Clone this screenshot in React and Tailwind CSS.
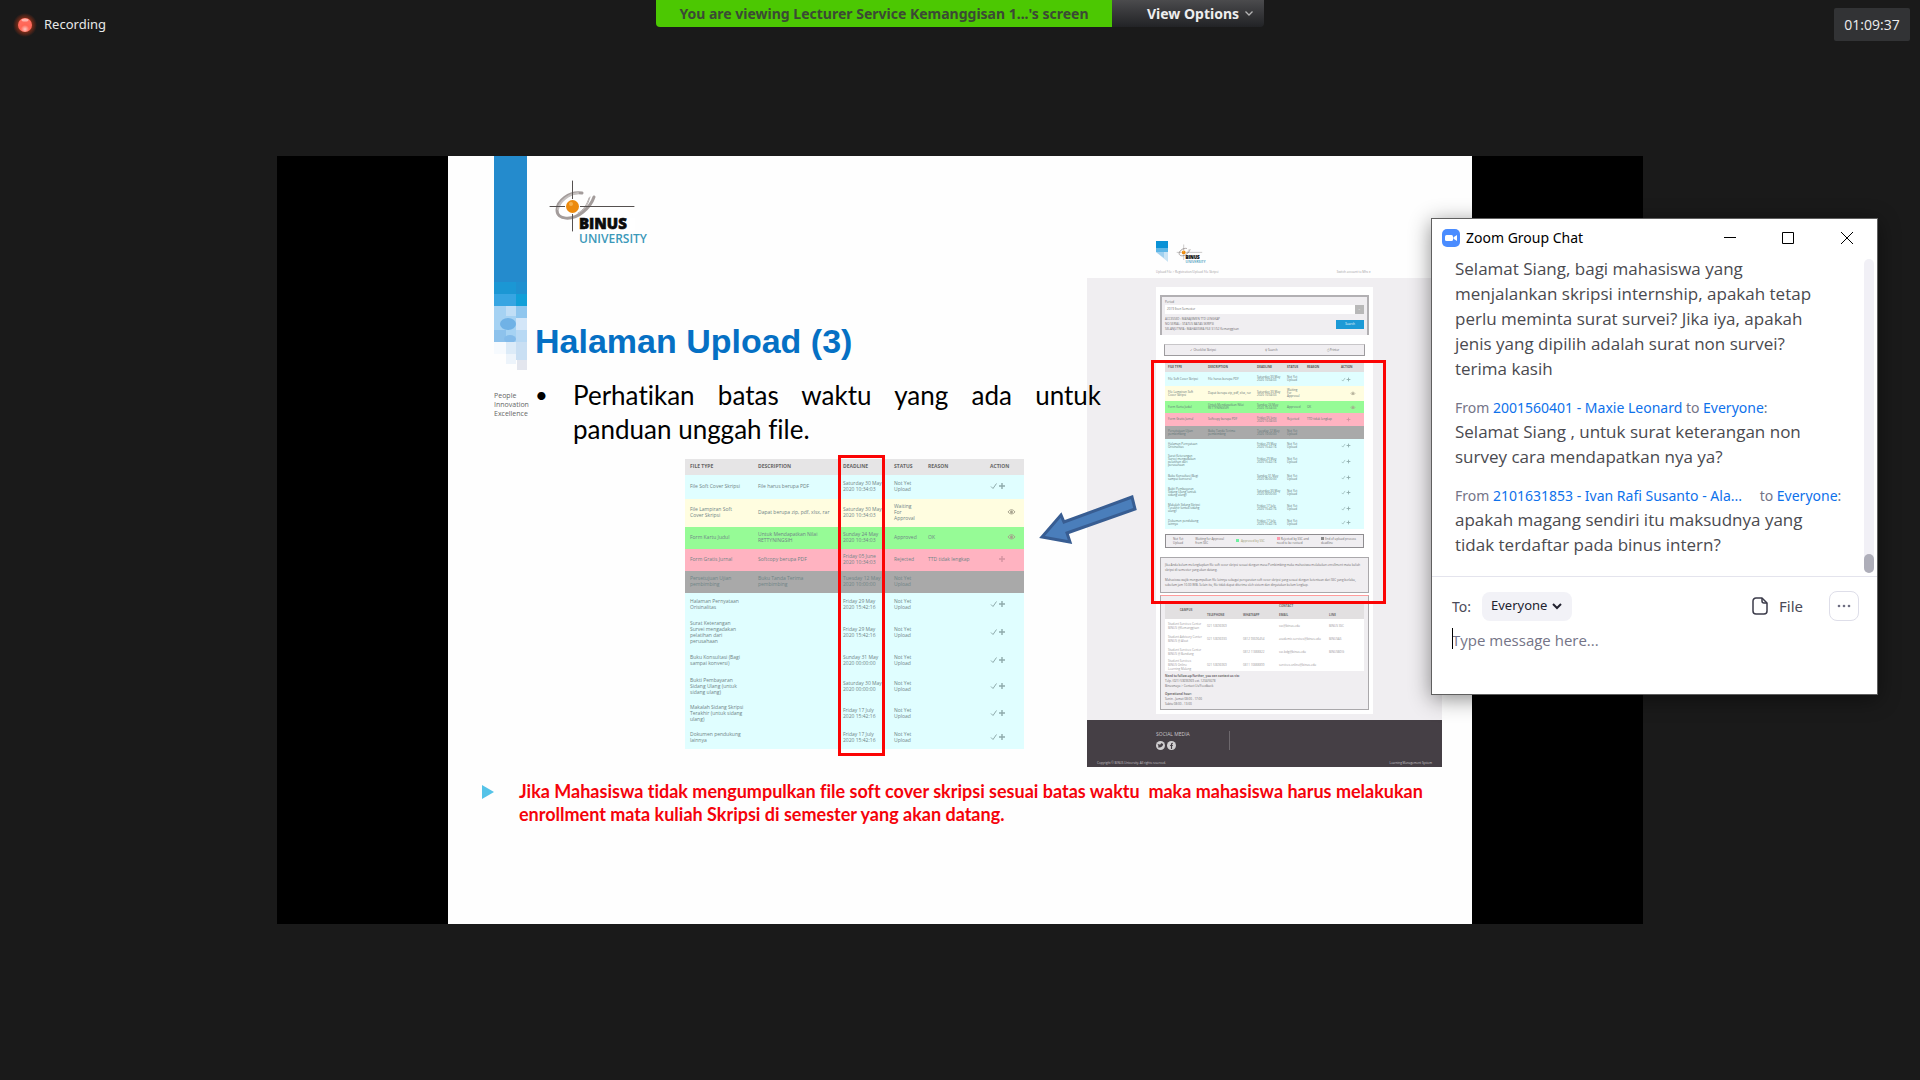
import React from "react";

const cyan = "bg-[#e0feff]";

const files = [
  { name: ["File Soft Cover Skripsi"], desc: ["File harus berupa PDF"], date: ["Saturday 30 May", "2020 10:34:03"], status: ["Not Yet", "Upload"], reason: "", act: "edit", bg: cyan, big: "h-[24px]", small: "h-[14px]" },
  { name: ["File Lampiran Soft", "Cover Skripsi"], desc: ["Dapat berupa zip, pdf, xlsx, rar"], date: ["Saturday 30 May", "2020 10:34:03"], status: ["Waiting", "For", "Approval"], reason: "", act: "view", bg: "bg-[#fffde0]", big: "h-[28px]", small: "h-[15px]" },
  { name: ["Form Kartu Judul"], desc: ["Untuk Mendapatkan Nilai", "RETTYNINGSIH"], date: ["Sunday 24 May", "2020 10:34:03"], status: ["Approved"], reason: "OK", act: "view", bg: "bg-[#96fb96]", big: "h-[22px]", small: "h-[12px]" },
  { name: ["Form Gratis Jurnal"], desc: ["Softcopy berupa PDF"], date: ["Friday 05 June", "2020 10:34:03"], status: ["Rejected"], reason: "TTD tidak lengkap", act: "faint", bg: "bg-[#ffb3c1]", big: "h-[22px]", small: "h-[13px]" },
  { name: ["Persetujuan Ujian", "pembimbing"], desc: ["Buku Tanda Terima", "pembimbing"], date: ["Tuesday 12 May", "2020 10:00:00"], status: ["Not Yet", "Upload"], reason: "", act: "", bg: "bg-[#a9a9a9]", big: "h-[22px]", small: "h-[13px]" },
  { name: ["Halaman Pernyataan", "Orisinalitas"], desc: [], date: ["Friday 29 May", "2020 15:42:16"], status: ["Not Yet", "Upload"], reason: "", act: "edit", bg: cyan, big: "h-[24px]", small: "h-[13px]" },
  { name: ["Surat Keterangan", "Survei mengadakan", "pelatihan dari", "perusahaan"], desc: [], date: ["Friday 29 May", "2020 15:42:16"], status: ["Not Yet", "Upload"], reason: "", act: "edit", bg: cyan, big: "h-[32px]", small: "h-[18px]" },
  { name: ["Buku Konsultasi (Bagi", "sampai konversi)"], desc: [], date: ["Sunday 31 May", "2020 00:00:00"], status: ["Not Yet", "Upload"], reason: "", act: "edit", bg: cyan, big: "h-[24px]", small: "h-[15px]" },
  { name: ["Bukti Pembayaran", "Sidang Ulang (untuk", "sidang ulang)"], desc: [], date: ["Saturday 30 May", "2020 00:00:00"], status: ["Not Yet", "Upload"], reason: "", act: "edit", bg: cyan, big: "h-[27px]", small: "h-[15px]" },
  { name: ["Makalah Sidang Skripsi", "Terakhir (untuk sidang", "ulang)"], desc: [], date: ["Friday 17 July", "2020 15:42:16"], status: ["Not Yet", "Upload"], reason: "", act: "edit", bg: cyan, big: "h-[27px]", small: "h-[16px]" },
  { name: ["Dokumen pendukung", "lainnya"], desc: [], date: ["Friday 17 July", "2020 15:42:16"], status: ["Not Yet", "Upload"], reason: "", act: "edit", bg: cyan, big: "h-[22px]", small: "h-[13px]" },
];

function Lines({ items }) {
  return items.map((t) => (
    <span key={t} className="block whitespace-nowrap">
      {t}
    </span>
  ));
}

function RowAction({ kind, small }) {
  const size = small ? "h-[5px] w-[10px]" : "h-[8px] w-[16px]";
  if (kind === "edit" || kind === "faint") {
    return (
      <svg viewBox="0 0 16 8" className={size} fill="none" stroke={kind === "faint" ? "#d493a0" : "#8fabac"}>
        {kind === "edit" && <path d="M1 4.5 3 6.5 6.5 1.5" strokeWidth="1" />}
        <path d="M12 1v6M9 4h6" strokeWidth="1.4" />
      </svg>
    );
  }
  if (kind === "view") {
    return (
      <svg viewBox="0 0 16 8" className={small ? "ml-[6px] h-[5px] w-[10px]" : "ml-[12px] h-[8px] w-[16px]"} fill="none" stroke="#a5a08c">
        <path d="M6 4c2-3 5-3 7 0-2 2.500-5 2.500-7 0z" />
        <circle cx="9.500" cy="4" r="1" fill="#a5a08c" />
      </svg>
    );
  }
  return null;
}

function UploadTable({ small = false }) {
  const pad = small ? "pl-[3px] pb-0" : "pl-[5px] pb-[2px]";
  const widths = small
    ? ["w-[40px]", "w-[49px]", "w-[30px]", "w-[20px]", "w-[34px]", "w-[26px]"]
    : ["w-[68px]", "w-[85px]", "w-[51px]", "w-[34px]", "w-[62px]", "w-[39px]"];
  return (
    <table
      className={
        small
          ? "w-[199px] table-fixed border-collapse text-left text-[3px] leading-[3px] text-[#5f7476]"
          : "w-[339px] table-fixed border-collapse text-left text-[5px] leading-[6px] text-[#6f8486]"
      }
    >
      <thead>
        <tr className={small ? "h-[10px] bg-[#e2e0e1] text-[#555]" : "h-[16px] bg-[#e6e5e6] text-[#666]"}>
          {["FILE TYPE", "DESCRIPTION", "DEADLINE", "STATUS", "REASON", "ACTION"].map((h, i) => (
            <th key={h} className={`${pad} ${widths[i]} pt-0 align-middle font-bold whitespace-nowrap`}>
              {h}
            </th>
          ))}
        </tr>
      </thead>
      <tbody>
        {files.map((f) => (
          <tr key={f.name[0]} className={`${f.bg} ${small ? f.small : f.big}`}>
            <td className={`${pad} pt-0 align-middle`}><Lines items={f.name} /></td>
            <td className={`${pad} pt-0 align-middle`}><Lines items={f.desc} /></td>
            <td className={`${pad} pt-0 align-middle`}><Lines items={f.date} /></td>
            <td className={`${pad} pt-0 align-middle`}><Lines items={f.status} /></td>
            <td className={`${pad} pt-0 align-middle whitespace-nowrap`}>{f.reason}</td>
            <td className={`${pad} pt-0 align-middle`}><RowAction kind={f.act} small={small} /></td>
          </tr>
        ))}
      </tbody>
    </table>
  );
}

function BinusLogo({ className }) {
  return (
    <svg viewBox="0 0 104 68" className={className} role="img" aria-label="Binus University">
      <g fill="none" strokeLinecap="round">
        <path d="M35 15C22 13 10 23 10 32c0 10 15 11 26 2 5-4 9-9 11-15" stroke="#a39c9b" strokeWidth="3" />
        <path d="M31 15c-9 1-18 8-20 16" stroke="#c4bfbe" strokeWidth="2" />
        <path d="M31 35c6-3 9-9 11-15M35 33c5-4 6-8 8-14" stroke="#b5afae" strokeWidth="1" />
        <path d="M3 28.500H87M25.500 3V53" stroke="#55504f" strokeWidth="1" />
      </g>
      <circle cx="25.500" cy="28.500" r="7.500" fill="#fff" />
      <circle cx="25.500" cy="28.500" r="6.500" fill="#ec8a0d" />
      <circle cx="24" cy="26" r="2" fill="#f6b04c" />
      <rect x="32" y="40" width="56" height="13" fill="#fff" />
      <text x="32" y="51" fontFamily="Open Sans, sans-serif" fontWeight="800" fontSize="15" fill="#0b0b0b" stroke="#0b0b0b" strokeWidth=".6">BINUS</text>
      <text x="32" y="65" fontFamily="Open Sans, sans-serif" fontWeight="600" fontSize="12" fill="#3b98b9">UNIVERSITY</text>
    </svg>
  );
}

function Ribbon() {
  return (
    <svg viewBox="0 0 33 215" className="block h-[215px] w-[33px]" aria-hidden="true">
      <rect width="33" height="150" fill="#248bcd" />
      <rect y="126" width="22" height="12" fill="#1b97d4" />
      <rect x="22" y="126" width="11" height="12" fill="#1f90d0" />
      <rect y="138" width="22" height="12" fill="#37a5e2" />
      <rect x="22" y="138" width="11" height="12" fill="#119fd8" />
      <rect y="150" width="33" height="36" fill="#a5d2f3" />
      <rect x="12" y="150" width="10" height="10" fill="#c0def6" />
      <rect x="22" y="150" width="11" height="12" fill="#8fc6ee" />
      <ellipse cx="14" cy="168" rx="8" ry="6" fill="#70b2e6" />
      <rect x="22" y="162" width="11" height="12" fill="#d3e6f8" />
      <rect x="0" y="174" width="12" height="12" fill="#8dc2ec" />
      <ellipse cx="16" cy="183" rx="6" ry="4" fill="#83bbea" />
      <rect x="22" y="174" width="11" height="12" fill="#b8d9f4" />
      <rect y="186" width="12" height="12" fill="#f6fafe" />
      <rect x="12" y="186" width="10" height="12" fill="#dcebf8" />
      <rect x="22" y="186" width="11" height="18" fill="#c9dff3" />
      <rect x="12" y="198" width="10" height="10" fill="#edf4fb" />
      <rect x="23" y="204" width="10" height="10" fill="#e3e6ee" />
    </svg>
  );
}

const contacts = [
  { who: ["Student Services Center", "BINUS @Kemanggisan"], phone: "021 53696969", wa: "", mail: "ssc@binus.edu", line: "BINUS SSC" },
  { who: ["Student Advisory Center", "BINUS @ Alsut"], phone: "021 53696930", wa: "0812 93696454", mail: "academic.services@binus.edu", line: "BINUSAS" },
  { who: ["Student Services Center", "BINUS @ Bandung"], phone: "", wa: "0812 11888822", mail: "ssc.bdg@binus.edu", line: "BINUSBDG" },
  { who: ["Student Services", "BINUS Online", "Learning Malang"], phone: "021 53696969", wa: "0811 10888899", mail: "services.online@binus.edu", line: "" },
];

function WebPage() {
  return (
    <div className="flex flex-col text-[3px] leading-[5px] text-[#6d6a6c]">
      <div className="flex h-[42px] flex-col justify-between pr-[71px] pl-[69px]">
        <div className="flex items-start gap-[8px] pt-[5px]">
          <svg viewBox="0 0 12 21" className="h-[21px] w-[12px]" aria-hidden="true">
            <rect width="12" height="8" fill="#0a92d6" />
            <rect y="7" width="12" height="4" fill="#5db6e6" />
            <path d="M0 11h12v10z" fill="#c9e4f5" />
            <path d="M0 11h8v6z" fill="#9fd0ef" />
          </svg>
          <BinusLogo className="mt-[3px] h-[20px] w-[31px]" />
        </div>
        <div className="flex justify-between pb-[3px] text-[#a09da0]">
          <span>Upload File &gt; Registration/Upload File Skripsi</span>
          <span>Switch account to Mhs ▾</span>
        </div>
      </div>
      <div className="flex justify-center bg-[#f0eef1] pt-[9px] pb-[6px]">
        <div className="w-[217px] bg-white px-[4px] pt-[8px] pb-[4px]">
          <div className="h-[40px] border-2 border-b-0 border-[#b2b0b3] bg-[#f0eef1] px-[3px] pt-[3px]">
            <p>Period</p>
            <div className="flex h-[9px] items-center justify-between bg-white pl-[2px]">
              <span>2019 Even Semester</span>
              <span className="h-[9px] w-[9px] bg-[#b8b8b8] text-center leading-[9px] text-white">⌄</span>
            </div>
            <div className="flex items-center justify-between pt-[3px]">
              <div>
                <p>ACCESSED : MANAJEMEN TTD LENGKAP</p>
                <p>NO SERIAL : STATUS BATAS SKRIPSI</p>
                <p>SELANJUTNYA : MAHASISWA FILE S1/S2 Kemanggisan</p>
              </div>
              <span className="h-[9px] w-[28px] bg-[#1d9ad6] text-center leading-[9px] text-white">Search</span>
            </div>
          </div>
          <div className="mx-[4px] mt-[9px] flex h-[12px] items-center justify-around border border-t-[#c8c6c9] border-[#9d9b9e] bg-[#f0eef1]">
            <span>✓ Checklist Skripsi</span>
            <span>⚲ Search</span>
            <span>⎙ Printer</span>
          </div>
          <div className="px-[5px] pt-[6px]">
            <UploadTable small />
          </div>
          <div className="mx-[5px] mt-[5px] flex h-[14px] items-center justify-between border border-[#8f8d90] bg-[#f0eef1] px-[7px] leading-[4px]">
            <span>Not Yet<br />Upload</span>
            <span>Waiting for Approval<br />from SSC</span>
            <span className="text-[#9c9c70]"><i className="mr-[2px] inline-block h-[3px] w-[3px] bg-[#6ef0a0]" />Approved by SSC</span>
            <span><i className="mr-[1px] inline-block h-[3px] w-[3px] bg-[#ff9cb0]" />Rejected by SSC and<br />need to be revised</span>
            <span><i className="mr-[1px] inline-block h-[3px] w-[3px] bg-[#888]" />End of upload process<br />deadline</span>
          </div>
          <div className="mt-[9px] h-[36px] overflow-hidden border border-[#aaa8ab] bg-[#f0eef1] px-[4px] pt-[5px]">
            <p>Jika Anda belum melengkapkan file soft cover skripsi sesuai dengan masa Pembimbing maka mahasiswa melakukan enrollment mata kuliah skripsi di semester yang akan datang.</p>
            <p className="pt-[5px]">Mahasiswa wajib mengumpulkan file lainnya sebagai persyaratan soft cover skripsi yang sesuai dengan ketentuan dari SSC yang berlaku, sebelum jam 10.00 WIB. Selain itu, file tidak dapat diterima oleh sistem dan dinyatakan belum lengkap.</p>
          </div>
          <div className="mt-[2px] border border-t-[#ff9c9c] border-[#aaa8ab] bg-[#f0eef1] px-[4px] pt-[5px] pb-[2px]">
            <table className="w-full table-fixed border-collapse bg-white text-left leading-[4px]">
              <thead className="bg-[#e2e0e1]">
                <tr className="h-[9px]">
                  <th className="w-[42px] p-0 text-center" rowSpan="2">CAMPUS</th>
                  <th className="w-[36px] p-0" />
                  <th className="w-[36px] p-0" />
                  <th className="w-[50px] p-0">CONTACT</th>
                  <th className="p-0" />
                </tr>
                <tr className="h-[9px]">
                  <th className="p-0">TELEPHONE</th>
                  <th className="p-0">WHATSAPP</th>
                  <th className="p-0">EMAIL</th>
                  <th className="p-0">LINE</th>
                </tr>
              </thead>
              <tbody className="text-[#9a979a]">
                {contacts.map((c) => (
                  <tr key={c.mail} className="h-[13px]">
                    <td className="p-0 pl-[3px] align-middle"><Lines items={c.who} /></td>
                    <td className="p-0 align-middle">{c.phone}</td>
                    <td className="p-0 align-middle">{c.wa}</td>
                    <td className="p-0 align-middle">{c.mail}</td>
                    <td className="p-0 align-middle">{c.line}</td>
                  </tr>
                ))}
              </tbody>
            </table>
            <div className="pt-[3px]">
              <p className="font-bold">Need to follow-up/further, you can contact us via:</p>
              <p>Telp. (021) 53696969 ext. 1234/5678</p>
              <p>Binusmaya &gt; Contact Us/Feedback</p>
              <p className="pt-[3px] font-bold">Operational hour:</p>
              <p>Senin - Jumat 08:00 - 17:00</p>
              <p>Sabtu 08:00 - 13:00</p>
            </div>
          </div>
        </div>
      </div>
      <div className="flex h-[47px] flex-col justify-between bg-[#453f45] px-[10px] pt-[11px] pb-[1px] text-[#c9c6c9]">
        <div className="flex gap-[39px] pl-[59px]">
          <div>
            <p className="text-[5px] leading-[6px]">SOCIAL MEDIA</p>
            <div className="flex gap-[2px] pt-[4px]">
              <svg viewBox="0 0 10 10" className="h-[9px] w-[9px]" aria-hidden="true">
                <circle cx="5" cy="5" r="5" fill="#d0ced0" />
                <path d="M2 7c3 1 6-1 6-4L7 3C6 2 5 3 5 4 4 4 3 4 2 3c0 1 0 2 1 2.500z" fill="#453f45" />
              </svg>
              <svg viewBox="0 0 10 10" className="h-[9px] w-[9px]" aria-hidden="true">
                <circle cx="5" cy="5" r="5" fill="#d0ced0" />
                <path d="M5 9V3.500Q5 2.500 6.500 2.500M3.500 5h3" stroke="#453f45" strokeWidth="1.300" fill="none" />
              </svg>
            </div>
          </div>
          <div className="h-[19px] w-px bg-[#6d686d]" />
        </div>
        <div className="flex justify-between">
          <span>Copyright © BINUS University. All rights reserved.</span>
          <span>Learning Management System</span>
        </div>
      </div>
    </div>
  );
}

function Slide() {
  return (
    <div className="relative w-full max-w-[1024px] bg-[#fefefe] pb-[98px] font-['Open_Sans',sans-serif]">
      <div className="flex pr-[30px] pl-[46px]">
        <div className="w-[33px] shrink-0">
          <Ribbon />
          <p className="pt-[20px] text-[7px] leading-[9px] text-[#666]">
            People
            <br />
            Innovation
            <br />
            Excellence
          </p>
        </div>
        <div className="relative z-10 min-w-0 flex-1 pt-[22px] pl-[8px]">
          <BinusLogo className="ml-[12px] h-[68px] w-[104px]" />
          <h1 className="pt-[75px] font-['Liberation_Sans',Arial,sans-serif] text-[34px] leading-[40px] font-bold text-[#0570c4]">
            Halaman Upload (3)
          </h1>
          <ul className="-mr-[14px] pt-[17px]">
            <li className="flex font-['Lato',sans-serif] text-[26px] leading-[34px] text-black [font-variant-ligatures:none]">
              <span className="w-[38px] shrink-0 text-[22px]">•</span>
              <span className="flex-1 text-justify">Perhatikan batas waktu yang ada untuk panduan unggah file.</span>
            </li>
          </ul>
          <div className="relative mt-[13px] ml-[150px] w-[339px]">
            <UploadTable />
            <div className="absolute top-[-4px] left-[153px] h-[301px] w-[47px] border-3 border-[#fb0404]" />
          </div>
        </div>
        <div className="relative w-[355px] shrink-0 pt-[80px]">
          <WebPage />
          <div className="absolute top-[204px] left-[64px] h-[244px] w-[235px] border-3 border-[#fb0404]" />
          <svg viewBox="0 0 100 56" className="absolute top-[337px] left-[-49px] z-20 h-[56px] w-[100px]" aria-hidden="true">
            <path d="M94 4 26 29 23 22 4 44 32 49 29 40 97 16z" fill="#4a7ebb" stroke="#385d92" strokeWidth="3" />
          </svg>
        </div>
      </div>
      <div className="flex gap-[25px] pt-[13px] pr-[40px] pl-[34px]">
        <svg viewBox="0 0 12 14" className="mt-[5px] h-[14px] w-[12px] shrink-0" aria-hidden="true">
          <path d="M0 0 12 7 0 14z" fill="#55c3e8" />
        </svg>
        <p className="font-['Lato',sans-serif] text-[18px] leading-[23px] font-bold whitespace-pre-wrap text-[#f5030b] [font-variant-ligatures:none]">
          {"Jika Mahasiswa tidak mengumpulkan file soft cover skripsi sesuai batas waktu  maka mahasiswa harus melakukan enrollment mata kuliah Skripsi di semester yang akan datang."}
        </p>
      </div>
    </div>
  );
}

function Message({ from, gap, text }) {
  return (
    <div className="pt-[15px]">
      <p className="text-[14px] leading-[23px] whitespace-nowrap text-[#747487]">
        From <a href="#sender" className="text-[#0e71eb]">{from}</a>
        <span className={gap ? "pl-[14px]" : ""}> to </span>
        <a href="#everyone" className="text-[#0e71eb]">Everyone</a>:
      </p>
      <p className="font-['Open_Sans',sans-serif] text-[17px] leading-[25px] text-[#4a4a4f]">{text}</p>
    </div>
  );
}

function ChatWindow() {
  return (
    <section className="absolute top-[218px] right-[42px] z-30 flex w-[447px] flex-col border border-[#5f5f5f] bg-white font-['Noto_Sans',sans-serif] shadow-[0_4px_20px_rgba(0,0,0,0.45)]">
      <header className="flex h-[37px] items-center pl-[10px]">
        <svg viewBox="0 0 18 18" className="h-[18px] w-[18px]" aria-hidden="true">
          <rect width="18" height="18" rx="5" fill="#4a8cff" />
          <rect x="3" y="6" width="8" height="6" rx="1.500" fill="#fff" />
          <path d="M11.500 8.200 15 6v6l-3.500-2.200z" fill="#fff" />
        </svg>
        <h2 className="ml-[6px] flex-1 text-[14px] text-black">Zoom Group Chat</h2>
        <button type="button" aria-label="Minimize" className="flex h-[37px] w-[58px] items-center justify-center">
          <svg viewBox="0 0 14 14" className="h-[14px] w-[14px]" stroke="#000" fill="none"><path d="M1 6.500h12" /></svg>
        </button>
        <button type="button" aria-label="Maximize" className="flex h-[37px] w-[58px] items-center justify-center">
          <svg viewBox="0 0 14 14" className="h-[14px] w-[14px]" stroke="#000" fill="none"><path d="M1.500 1.500h11v11h-11z" /></svg>
        </button>
        <button type="button" aria-label="Close" className="flex h-[37px] w-[60px] items-center justify-center">
          <svg viewBox="0 0 14 14" className="h-[14px] w-[14px]" stroke="#000" fill="none"><path d="M1 1l12 12M13 1 1 13" /></svg>
        </button>
      </header>
      <div className="flex border-b border-[#e4e4ed] pr-[3px] pb-[3px]">
        <div className="min-w-0 flex-1 pb-[16px] pl-[23px]">
          <div className="w-[360px]">
            <p className="font-['Open_Sans',sans-serif] text-[17px] leading-[25px] text-[#4a4a4f]">
              Selamat Siang, bagi mahasiswa yang menjalankan skripsi internship, apakah tetap perlu meminta surat survei? Jika iya, apakah jenis yang dipilih adalah surat non survei? terima kasih
            </p>
            <Message from="2001560401 - Maxie Leonard" text="Selamat Siang , untuk surat keterangan non survey cara mendapatkan nya ya?" />
            <Message gap from="2101631853 - Ivan Rafi Susanto - Ala..." text="apakah magang sendiri itu maksudnya yang tidak terdaftar pada binus intern?" />
          </div>
        </div>
        <div className="mt-[3px] flex w-[10px] flex-col justify-end rounded-full bg-[#f1f0f6]">
          <div className="h-[19px] rounded-full bg-[#aeaeb9]" />
        </div>
      </div>
      <div className="flex items-center pt-[14px] pr-[18px] pl-[20px] text-[15px] text-[#4a4a58]">
        <label htmlFor="to" className="w-[30px] text-[14px]">To:</label>
        <div className="relative">
          <select id="to" className="h-[29px] w-[90px] appearance-none rounded-[8px] bg-[#f2f2f7] pl-[9px] text-[13px] text-[#222230]">
            <option>Everyone</option>
          </select>
          <svg viewBox="0 0 10 8" className="pointer-events-none absolute top-[10px] right-[10px] h-[8px] w-[10px]" fill="none" stroke="#222230" strokeWidth="2" aria-hidden="true">
            <path d="M1 2l4 4 4-4" />
          </svg>
        </div>
        <button type="button" className="ml-auto flex items-center gap-[11px]">
          <svg viewBox="0 0 16 18" className="h-[18px] w-[16px]" fill="none" stroke="#3b3b4a" strokeWidth="1.500" strokeLinejoin="round" aria-hidden="true">
            <path d="M4 1h6l5 5v8a3 3 0 0 1-3 3H4a3 3 0 0 1-3-3V4a3 3 0 0 1 3-3z" />
            <path d="M10 1v3a2 2 0 0 0 2 2h3" />
          </svg>
          File
        </button>
        <button type="button" aria-label="More" className="ml-[26px] flex h-[30px] w-[30px] items-center justify-center rounded-[8px] border border-[#dedee9]">
          <svg viewBox="0 0 14 4" className="h-[4px] w-[14px]" fill="#6e6e82" aria-hidden="true">
            <circle cx="2" cy="2" r="1.300" />
            <circle cx="7" cy="2" r="1.300" />
            <circle cx="12" cy="2" r="1.300" />
          </svg>
        </button>
      </div>
      <div className="relative pt-[7px] pl-[20px]">
        <span className="absolute top-[7px] left-[20px] h-[21px] w-px bg-black" />
        <textarea
          aria-label="Message"
          placeholder="Type message here..."
          className="block h-[66px] w-full resize-none font-['Open_Sans',sans-serif] text-[15px] leading-[24px] outline-none placeholder:text-[#747487]"
        />
      </div>
    </section>
  );
}

export default function App() {
  return (
    <main className="relative min-h-screen bg-[#1a1a1a] font-['Noto_Sans',sans-serif]">
      <header className="grid h-[156px] grid-cols-[1fr_auto_1fr] items-start">
        <div className="flex items-center gap-[7px] pt-[13px] pl-[13px]">
          <svg viewBox="0 0 24 24" className="h-[24px] w-[24px]" aria-hidden="true">
            <defs>
              <radialGradient id="glow">
                <stop offset="50%" stopColor="#8a2f18" />
                <stop offset="100%" stopColor="#1a1a1a" />
              </radialGradient>
              <radialGradient id="dot" cy="0.8">
                <stop offset="0%" stopColor="#ffc4be" />
                <stop offset="60%" stopColor="#ff6554" />
                <stop offset="100%" stopColor="#ff6a5c" />
              </radialGradient>
            </defs>
            <circle cx="12" cy="12" r="12" fill="url(#glow)" />
            <circle cx="12" cy="12" r="7" fill="url(#dot)" />
            <ellipse cx="12" cy="7" rx="3.500" ry="1.500" fill="#ffb3ab" />
          </svg>
          <span className="text-[13px] text-[#e8e8e8]">Recording</span>
        </div>
        <div className="flex h-[27px] overflow-hidden rounded-b-[4px] text-[14px] leading-[27px] font-bold">
          <p className="w-[456px] bg-[#4cc802] text-center text-[#3b4a35] whitespace-nowrap">
            You are viewing Lecturer Service Kemanggisan 1...'s screen
          </p>
          <button type="button" className="flex w-[152px] items-center gap-[6px] bg-linear-to-b from-[#4b4b4d] to-[#222326] pl-[35px] whitespace-nowrap text-[#eee]">
            View Options
            <svg viewBox="0 0 8 5" className="h-[5px] w-[8px] shrink-0" fill="none" stroke="#b5b5b5" strokeWidth="1.300" aria-hidden="true">
              <path d="M.5.500 4 4 7.500.500" />
            </svg>
          </button>
        </div>
        <div className="mt-[8px] mr-[10px] flex h-[33px] w-[76px] items-center justify-center justify-self-end rounded-[2px] bg-[#323335] font-['Open_Sans',sans-serif] text-[14px] text-[#eee]">
          01:09:37
        </div>
      </header>
      <div className="mx-auto flex w-full max-w-[1366px] justify-center bg-black">
        <Slide />
      </div>
      <ChatWindow />
    </main>
  );
}
